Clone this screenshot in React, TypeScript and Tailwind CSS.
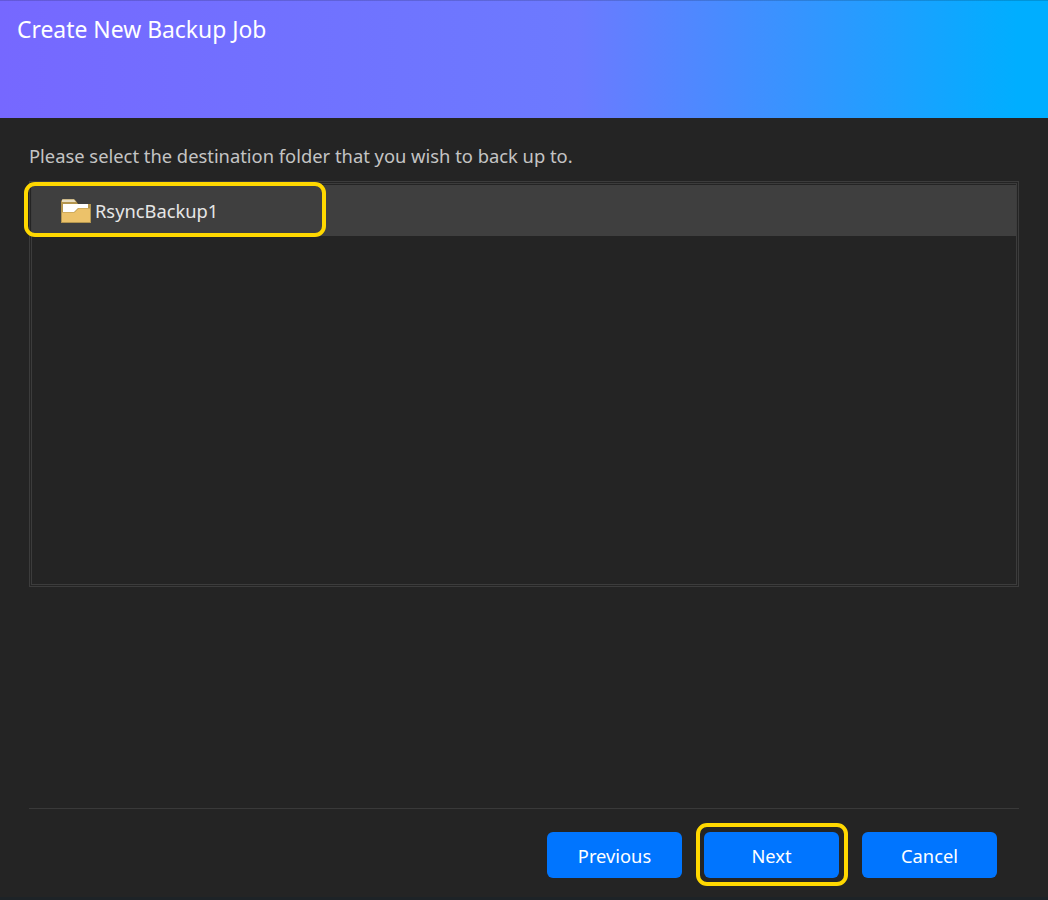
import React from 'react';

function FolderIcon() {
  return (
    <svg width="32" height="26" viewBox="0 0 32 26" className="shrink-0">
      <path d="M1 3 L1 25 L31 25 L31 6 L18 6 L16 3 L14 1 L3 1 Z" fill="#b4964f" />
      <path d="M2 1.5 L14 1.5 L16 4 L2 4 Z" fill="#e6dcc2" />
      <path d="M3 6 L28 6 L28 10 L18 10 L14 14 L3 14 Z" fill="#ffffff" />
      <path d="M2 14.5 L14.5 14.5 L18.5 10.5 L30 10.5 L30 24 L2 24 Z" fill="#ecc26a" />
    </svg>
  );
}

function ActionButton({ label, highlighted }: { label: string; highlighted?: boolean }) {
  return (
    <div className="relative">
      <button className="w-[135px] h-[46px] pt-[1px] rounded-md bg-[#0075ff] text-white text-[18.3px]">{label}</button>
      {highlighted && (
        <div className="absolute -left-[8px] -right-[9px] -top-[9px] -bottom-[8px] rounded-[11px] border-4 border-[#ffd800]" />
      )}
    </div>
  );
}

export default function App() {
  return (
    <div className="w-[1048px] h-[900px] flex flex-col bg-[#242424] font-['Noto_Sans','Open_Sans',sans-serif] overflow-hidden">
      <div className="h-[118px] shrink-0 px-[17px] pt-[14px] bg-[linear-gradient(to_right,#7668ff_0%,#6c7aff_55%,#00aeff_97%)] border-t border-black/15">
        <h1 className="text-[22.9px] leading-[30px] text-white">Create New Backup Job</h1>
      </div>

      <div className="flex-1 flex flex-col px-[29px]">
        <p className="mt-[25px] text-[18.35px] leading-[26px] text-[#c4c4c4]">
          Please select the destination folder that you wish to back up to.
        </p>

        <div className="relative mt-[12px] h-[406px] border border-[#3c3c3c] p-px">
          <div className="h-full border border-[#3c3c3c]">
            <div className="h-[51px] mt-[1px] bg-[#3f3f3f] flex items-center pl-[28px] gap-[3px]">
              <FolderIcon />
              <span className="text-[18.3px] pt-[1px] text-[#e6e6e6]">RsyncBackup1</span>
            </div>
          </div>
          <div className="absolute -left-[6px] top-0 w-[302px] h-[55px] rounded-[11px] border-4 border-[#ffd800]" />
        </div>

        <div className="mt-[221px] h-px bg-[#393939]" />

        <div className="mt-[23px] flex justify-end pr-[22px]">
          <ActionButton label="Previous" />
          <div className="ml-[22px]">
            <ActionButton label="Next" highlighted />
          </div>
          <div className="ml-[23px]">
            <ActionButton label="Cancel" />
          </div>
        </div>
      </div>

      <div className="h-[3px] shrink-0 bg-[#1d2327]" />
    </div>
  );
}
